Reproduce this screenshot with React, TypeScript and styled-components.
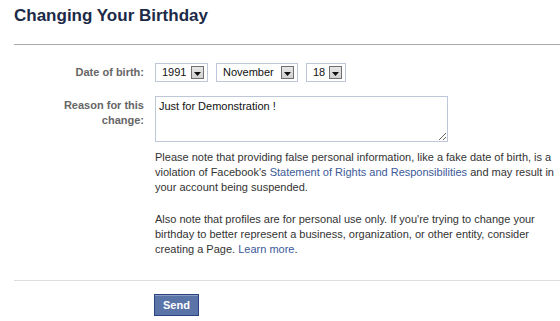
import styled, { createGlobalStyle } from 'styled-components'

const GlobalStyle = createGlobalStyle`
  html, body {
    margin: 0;
    padding: 0;
    background: #fff;
  }
  body {
    font-family: 'Liberation Sans', Arial, sans-serif;
    font-size: 11px;
    color: #333;
  }
`

function Select({ value, width }: { value: string; width: number }) {
  return (
    <SelectBox $width={width}>
      <SelectValue>{value}</SelectValue>
      <ArrowButton>
        <svg width="7" height="4" viewBox="0 0 7 4">
          <path d="M0 0h7L3.5 4z" fill="#111" />
        </svg>
      </ArrowButton>
    </SelectBox>
  )
}

export default function App() {
  return (
    <>
      <GlobalStyle />
      <Page>
        <Header>
          <Title>Changing Your Birthday</Title>
        </Header>
        <Form>
          <Label>Date of birth:</Label>
          <Selects>
            <Select value="1991" width={53} />
            <Select value="November" width={82} />
            <Select value="18" width={40} />
          </Selects>

          <Label>
            Reason for this
            <br />
            change:
          </Label>
          <TextArea defaultValue="Just for Demonstration !" />

          <Spacer />
          <Notes>
            <p>
              Please note that providing false personal information, like a fake
              date of birth, is a violation of Facebook's{' '}
              <Link href="#">Statement of Rights and Responsibilities</Link> and
              may result in your account being suspended.
            </p>
            <p>
              Also note that profiles are for personal use only. If you're trying
              to change your birthday to better represent a business,
              organization, or other entity, consider creating a Page.{' '}
              <Link href="#">Learn more</Link>.
            </p>
          </Notes>
        </Form>
        <Footer>
          <SendButton type="button">Send</SendButton>
        </Footer>
      </Page>
    </>
  )
}

const Page = styled.div`
  padding-left: 14px;
  width: 546px;
`
const Header = styled.div`
  height: 45px;
  border-bottom: 1px solid #aaa;
  box-sizing: border-box;
`
const Title = styled.h2`
  margin: 0;
  padding-top: 6px;
  font-size: 17px;
  font-weight: bold;
  color: #1c2a47;
`
const Form = styled.div`
  display: grid;
  grid-template-columns: 130px 1fr;
  column-gap: 11px;
  row-gap: 14px;
  padding: 18px 0 23px;
  border-bottom: 1px solid #ddd;
`
const Label = styled.div`
  text-align: right;
  font-weight: bold;
  color: #666;
  line-height: 15px;
  padding-top: 2px;
`
const Selects = styled.div`
  display: flex;
  gap: 8px;
`
const SelectBox = styled.div<{ $width: number }>`
  width: ${(p) => p.$width}px;
  height: 19px;
  box-sizing: border-box;
  border: 1px solid #bdc7d8;
  display: flex;
  align-items: center;
  justify-content: space-between;
  padding: 0 3px 0 6px;
  color: #111;
`
const SelectValue = styled.span`
  line-height: 17px;
`
const ArrowButton = styled.span`
  width: 13px;
  height: 13px;
  box-sizing: border-box;
  border: 1px solid #6f6f6f;
  background: linear-gradient(#e6e6e6, #d2d2d2);
  display: flex;
  align-items: center;
  justify-content: center;
  padding-top: 2px;
`
const TextArea = styled.textarea`
  width: 293px;
  height: 46px;
  box-sizing: border-box;
  border: 1px solid #bdc7d8;
  padding: 3px;
  font-family: 'Liberation Sans', Arial, sans-serif;
  font-size: 11px;
  color: #111;
  margin: 0;
`
const Spacer = styled.div``
const Notes = styled.div`
  width: 400px;
  margin-top: -6px;
  line-height: 15px;
  color: #333;

  p {
    margin: 0 0 17px;
  }
  p:last-child {
    margin-bottom: 0;
  }
`
const Link = styled.a`
  color: #3b5998;
  text-decoration: none;
`
const Footer = styled.div`
  padding: 13px 0 0 140px;
`
const SendButton = styled.button`
  height: 22px;
  padding: 0 8px;
  border: 1px solid #29447e;
  background: #5b74a8;
  box-shadow: inset 0 1px 0 #8a9cc2;
  color: #fff;
  font-family: 'Liberation Sans', Arial, sans-serif;
  font-size: 11px;
  font-weight: bold;
`
